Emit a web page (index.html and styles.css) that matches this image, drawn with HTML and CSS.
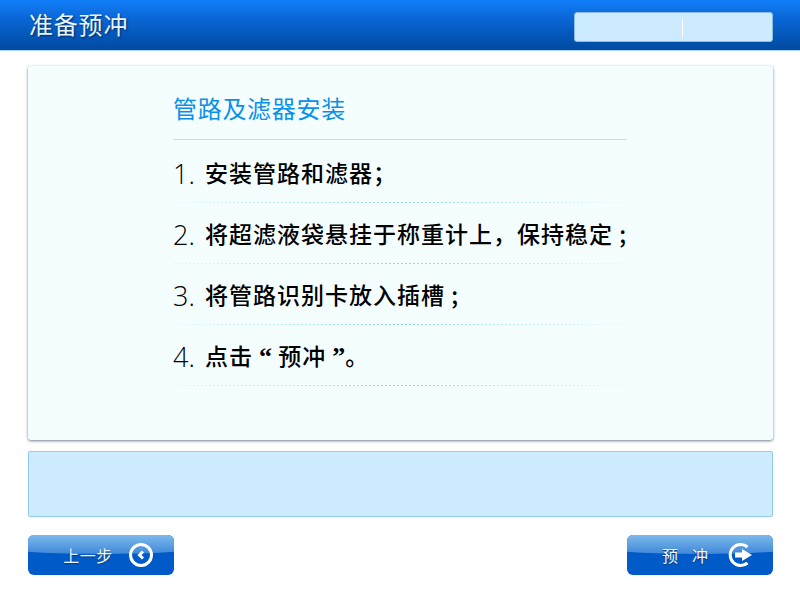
FILE: index.html
```html
<!DOCTYPE html>
<html lang="zh-CN">

<head>
    <meta charset="UTF-8">
    <title>准备预冲</title>
    <link rel="stylesheet" href="styles.css">
</head>

<body>
    <!-- 顶部标题栏 -->
    <header class="topbar">
        <h1 class="topbar-title">准备预冲</h1>
        <div class="status-box"><span class="status-split"></span></div>
    </header>

    <main class="content">
        <section class="card">
            <h2 class="card-title">管路及滤器安装</h2>
            <ol class="steps">
                <li class="step"><span class="step-num">1.</span><span class="step-text">安装管路和滤器；</span></li>
                <li class="step"><span class="step-num">2.</span><span class="step-text">将超滤液袋悬挂于称重计上，保持稳定 ;</span></li>
                <li class="step"><span class="step-num">3.</span><span class="step-text">将管路识别卡放入插槽 ;</span></li>
                <li class="step"><span class="step-num">4.</span><span class="step-text">点击<span class="quote quote-open">“</span> 预冲 <span class="quote">”</span>。</span></li>
            </ol>
        </section>

        <div class="message-box"></div>

        <!-- 底部按钮 -->
        <nav class="actions">
            <button class="btn">
                <span class="btn-label">上一步</span>
                <svg class="btn-icon" width="26" height="26" viewBox="0 0 26 26">
                    <circle cx="13" cy="13" r="10.5" fill="none" stroke="#fff" stroke-width="3" />
                    <path d="M15 9.5 L11.5 13 L15 16.5" fill="none" stroke="#fff" stroke-width="3" />
                </svg>
            </button>
            <button class="btn">
                <span class="btn-label btn-label-wide">预冲</span>
                <svg class="btn-icon" width="26" height="26" viewBox="0 0 26 26">
                    <path d="M20.5 5 A10.5 10.5 0 1 0 20.5 21" fill="none" stroke="#fff" stroke-width="3" />
                    <path d="M8 10.5 H15 V7 L25 13 L15 19 V15.5 H8 Z" fill="#fff" />
                </svg>
            </button>
        </nav>
    </main>
</body>

</html>
```

FILE: styles.css
```css
* {
    box-sizing: border-box;
}

body {
    margin: 0;
    height: 600px;
    overflow: hidden;
    background-color: #fff;
    font-family: "Noto Sans CJK SC", "Noto Sans", sans-serif;
}

.topbar {
    height: 51px;
    padding: 0 27px 0 29px;
    display: flex;
    justify-content: space-between;
    align-items: center;
    background: linear-gradient(#127ffa, #0a67d8 35%, #004a9f);
    border-bottom: 1px solid #a9d4f5;
}

.topbar-title {
    margin: -4px 0 0;
    font-size: 24px;
    font-weight: 400;
    letter-spacing: 0.8px;
    color: #e8f5ff;
    text-shadow: 1px 1px 2px #002a60;
}

.status-box {
    width: 199px;
    height: 30px;
    margin-top: 4px;
    padding-left: 107px;
    display: flex;
    align-items: center;
    background-color: #cdebff;
    border: 1px solid #8cbce6;
    border-radius: 3px;
}

.status-split {
    width: 1px;
    height: 19px;
    background-color: #fff;
}

.content {
    padding: 15px 27px 0 28px;
}

.card {
    height: 374px;
    padding: 24px 146px 0 145px;
    background-color: #f5feff;
    border-radius: 3px;
    box-shadow: 0 1px 3px rgba(60, 90, 110, 0.75);
}

.card-title {
    margin: 0;
    height: 50px;
    font-size: 24px;
    line-height: 36px;
    font-weight: 400;
    letter-spacing: 0.7px;
    color: #0a8fea;
    border-bottom: 1px solid #c4dde8;
}

.steps {
    margin: 2px 0 0;
    padding: 0;
    list-style: none;
}

.step {
    height: 61px;
    padding-bottom: 2px;
    position: relative;
    display: flex;
    align-items: center;
    color: #000;
}

/* 虚线两端淡出 */
.step::after {
    content: "";
    position: absolute;
    left: 0;
    right: 0;
    bottom: 0;
    height: 1px;
    background: repeating-linear-gradient(90deg, #8ed3f7 0 2px, transparent 2px 4px);
    -webkit-mask-image: linear-gradient(90deg, rgba(0, 0, 0, 0.15), #000 50%, rgba(0, 0, 0, 0.1));
    mask-image: linear-gradient(90deg, rgba(0, 0, 0, 0.15), #000 50%, rgba(0, 0, 0, 0.1));
}

.step-num {
    width: 32px;
    margin-top: 3px;
    font-family: "Open Sans", sans-serif;
    font-size: 27px;
    font-weight: 300;
    color: #000;
}

.step-text {
    font-size: 23px;
    font-weight: 500;
    letter-spacing: 1px;
    white-space: nowrap;
}

.quote {
    font-family: "Liberation Serif", serif;
    font-size: 26px;
    font-weight: 700;
    letter-spacing: 0;
}

.quote-open {
    margin-left: 6px;
}

.message-box {
    height: 66px;
    margin-top: 11px;
    background-color: #cdecff;
    border: 1px solid #93cbf0;
    border-radius: 2px;
}

.actions {
    margin-top: 18px;
    display: flex;
    justify-content: space-between;
}

.btn {
    position: relative;
    width: 146px;
    height: 40px;
    padding: 0 20px 0 35px;
    display: flex;
    justify-content: space-between;
    align-items: center;
    overflow: hidden;
    border: 0;
    border-radius: 6px;
    background-color: #005ac8;
    font-family: inherit;
}

/* 按钮上半部高光 */
.btn::before {
    content: "";
    position: absolute;
    left: -20px;
    right: -20px;
    top: -30px;
    height: 49px;
    background: linear-gradient(#7fbcec 60%, #3f87da);
    border-radius: 0 0 50% 50% / 0 0 6px 6px;
}

.btn-label,
.btn-icon {
    position: relative;
}

.btn-label {
    width: 50px;
    font-size: 16px;
    letter-spacing: 0.5px;
    color: #f2f6fa;
    text-shadow: 0 1px 1px #123a70;
    white-space: nowrap;
}

.btn-label-wide {
    letter-spacing: 14px;
}
```
